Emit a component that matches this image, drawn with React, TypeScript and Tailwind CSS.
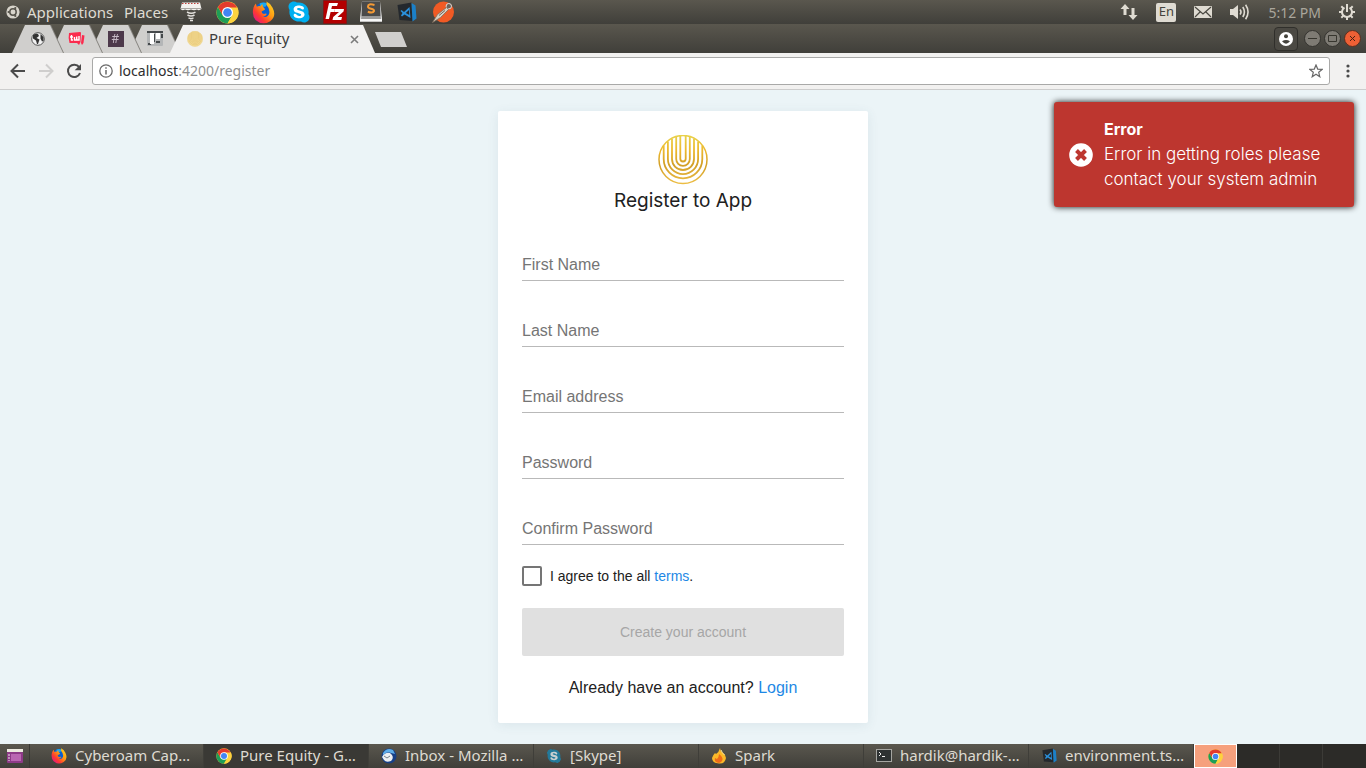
import type { ReactNode } from "react";
import { FaSkype } from "react-icons/fa6";

const panel = "bg-gradient-to-b from-[#5a574e] to-[#403f3a]";

function Chrome({ size }: { size: number }) {
  return (
    <svg width={size} height={size} viewBox="0 0 48 48" aria-hidden="true">
      <circle cx="24" cy="24" r="23" fill="#fdd23e" />
      <path d="M4.1 12.5 A23 23 0 0 0 24 47 L34 29.8 L24 24 L14 29.8 Z" fill="#1e9e57" />
      <path d="M43.9 12.5 A23 23 0 0 1 24 47 L34 29.8 L32 13 Z" fill="#fdd23e" />
      <path d="M4.1 12.5 L14 29.8 L24 13.5 H43.9 A23 23 0 0 0 4.1 12.5 Z" fill="#e33b2e" />
      <circle cx="24" cy="24" r="11.5" fill="#fff" />
      <circle cx="24" cy="24" r="9" fill="#4285f4" />
    </svg>
  );
}

function Firefox({ size }: { size: number }) {
  return (
    <svg width={size} height={size} viewBox="0 0 48 48" aria-hidden="true">
      <defs>
        <linearGradient id="fox" x1="1" y1="0" x2="0.1" y2="0.9">
          <stop offset="0" stopColor="#ffe226" />
          <stop offset="0.45" stopColor="#ff9a13" />
          <stop offset="0.75" stopColor="#ff3b30" />
          <stop offset="1" stopColor="#e31587" />
        </linearGradient>
      </defs>
      <circle cx="24" cy="22" r="19" fill="#0a5fd0" />
      <path d="M16 5 Q24 1 32 5 L28 12 L17 12 Z" fill="#1aa8f0" />
      <path
        d="M3 14 Q5 8 8 5 L10 12 Q14 9 18 11 Q19 8 22 6 Q21 12 26 15 L27 18 Q22 20 20 22 Q20 27 25 27 Q29 25 31 27 Q29 32 23 32 Q32 36 36 26 Q38 17 30 8 Q31 4 30 1 Q39 5 43 14 Q52 32 38 42 Q22 52 8 40 Q-1 30 3 14 Z"
        fill="url(#fox)"
      />
    </svg>
  );
}

function Skype({ size, dim = false }: { size: number; dim?: boolean }) {
  return (
    <FaSkype
      size={size}
      aria-hidden="true"
      className={
        dim
          ? "rounded-lg bg-[radial-gradient(circle,#c9cfd0_50%,transparent_51%)] text-[#23799a]"
          : "rounded-lg bg-[radial-gradient(circle,#fff_50%,transparent_51%)] text-[#00aff0]"
      }
    />
  );
}

function VsCode({ size }: { size: number }) {
  return (
    <svg width={size} height={size} viewBox="0 0 40 40" aria-hidden="true">
      <path d="M1 6 L29 1 L31 38 L5 36 Z" fill="#24282d" />
      <path d="M29 2 L37 7 L39 33 L31 39 Z" fill="#1b80c8" />
      <path d="M25 10 L14 20 L9 16 L7 18 L11 22 L8 27 L10 29 L15 25 L27 32 Z M24 16 L24.5 26 L17.5 22 Z" fill="#2a90dc" fillRule="evenodd" />
    </svg>
  );
}

function FileZilla() {
  return (
    <svg width="24" height="24" viewBox="0 0 24 24" aria-hidden="true">
      <rect x="0.5" y="0.5" width="23" height="23" fill="#b30000" stroke="#7d1010" strokeDasharray="1 1" />
      <path d="M6 3 H15 L14 6 H9 L8.3 9 H12 L11.3 12 H7.6 L6 19 H2.5 Z" fill="#fff" />
      <path d="M12 9 H21 L20.5 11.5 L14.5 17 H19 L18.3 20 H9.5 L10.2 17 L16 12 H11.3 Z" fill="#fff" />
    </svg>
  );
}

function Sublime() {
  return (
    <svg width="24" height="24" viewBox="0 0 24 24" aria-hidden="true">
      <path d="M3 1.5 H21 L23 18 V21.5 H1 V18 Z" fill="#dcdcdc" />
      <path d="M3 1.5 H21 L21.5 16.5 H2.5 Z" fill="#4a4a4a" />
      <path d="M2.5 16.5 H21.5 L22 19 H2 Z" fill="#9b9b9b" />
      <path d="M1 19 H23 V21.5 H1 Z" fill="#f7f7f7" />
      <path d="M15.5 5 Q9 3.2 9 6.5 Q9 8.2 12 8.8 Q15.3 9.4 15 11.2 Q14 13.5 8.8 11.7" fill="none" stroke="#f59a35" strokeWidth="2" />
    </svg>
  );
}

function Postman() {
  return (
    <svg width="24" height="24" viewBox="0 0 24 24" aria-hidden="true">
      <circle cx="12.5" cy="12" r="10.5" fill="#f15a24" />
      <circle cx="17.8" cy="6.2" r="2.7" fill="#6b6259" stroke="#ddd" />
      <path d="M15.5 7.5 L6.5 14.5 L1.5 22.5 L9.5 17.5 L17.5 9.5 Z" fill="#d9d0c2" stroke="#806d5c" strokeWidth="0.8" />
      <path d="M8 15.5 L14 10.5" stroke="#6f6459" strokeWidth="1" />
    </svg>
  );
}

function Robo() {
  return (
    <svg width="24" height="24" viewBox="0 0 24 24" aria-hidden="true">
      <path d="M3 2.5 H21 L22.5 9 Q20 11 18 9.5 Q15 11 12 9.5 Q9 11 6 9.5 Q3 11 1.5 9 Z" fill="#f4f2ee" />
      <path d="M3 3.5 H21" stroke="#bd4039" strokeWidth="1.2" strokeDasharray="1.5 1.5" />
      <path d="M2 8.5 H22" stroke="#a9a6a1" strokeWidth="1" />
      <path d="M8 12 Q12 14.5 16.5 12.2 M8.5 15 Q12 17 15.5 15 M9.5 17.8 Q12 19.2 14.5 17.8 M11 20.5 H14" fill="none" stroke="#e4e2de" strokeWidth="1.5" />
    </svg>
  );
}

function Equity({ size, faint = false }: { size: number; faint?: boolean }) {
  return (
    <svg width={size} height={size} viewBox="0 0 50 50" aria-hidden="true">
      <defs>
        <linearGradient id="gold" x1="0" y1="0" x2="0" y2="50" gradientUnits="userSpaceOnUse">
          <stop offset="0" stopColor="#e8d24c" />
          <stop offset="0.3" stopColor="#edb92e" />
          <stop offset="0.6" stopColor="#d29f27" />
          <stop offset="1" stopColor="#eebf45" />
        </linearGradient>
      </defs>
      <circle cx="25" cy="24.5" r="24" fill={faint ? "#f2d993" : "none"} stroke={faint ? "#ecd080" : "url(#gold)"} strokeWidth="1.5" />
      <g fill="none" stroke={faint ? "#e6c672" : "url(#gold)"} strokeWidth="1.8">
        <path d="M22.3 1 V23.8 A2.7 2.7 0 0 0 27.7 23.8 V1" />
        <path d="M18.2 2 V24 A6.8 6.8 0 0 0 31.8 24 V2" />
        <path d="M14 4 V24 A11 11 0 0 0 36 24 V4" />
        <path d="M9.9 6.5 V24 A15.1 15.1 0 0 0 40.1 24 V6.5" />
        <path d="M5.7 10.5 V24 A19.3 19.3 0 0 0 44.3 24 V10.5" />
      </g>
    </svg>
  );
}

const launcher = "flex size-6 items-center justify-center";

function TopPanel() {
  return (
    <header className={`flex h-6 items-center justify-between pl-[6px] pr-[11px] text-[15px] text-[#dfdbd2] ${panel}`}>
      <div className="flex items-center">
        <svg width="14" height="14" viewBox="0 0 14 14" aria-hidden="true">
          <circle cx="7" cy="7" r="6.6" fill="#d8d4cb" />
          <circle cx="7" cy="7" r="3.2" fill="none" stroke="#57544c" strokeWidth="1.5" />
          <circle cx="2.6" cy="7" r="1.1" fill="#57544c" />
          <circle cx="9.3" cy="3.1" r="1.1" fill="#57544c" />
          <circle cx="9.3" cy="10.9" r="1.1" fill="#57544c" />
        </svg>
        <button className="ml-[7px] w-[85px] whitespace-nowrap text-left">Applications</button>
        <button className="ml-3 w-[43px] whitespace-nowrap text-left">Places</button>
        <div className="ml-3 flex gap-3">
          <button aria-label="Robomongo" className={launcher}><Robo /></button>
          <button aria-label="Chrome" className={launcher}><Chrome size={23} /></button>
          <button aria-label="Firefox" className={launcher}><Firefox size={23} /></button>
          <button aria-label="Skype" className={launcher}><Skype size={24} /></button>
          <button aria-label="FileZilla" className={launcher}><FileZilla /></button>
          <button aria-label="Sublime Text" className={launcher}><Sublime /></button>
          <button aria-label="Code" className={launcher}><VsCode size={20} /></button>
          <button aria-label="Postman" className={launcher}><Postman /></button>
        </div>
      </div>
      <div className="flex items-center gap-[18px]">
        <svg width="18" height="18" viewBox="0 0 18 18" fill="#dfdbd2" aria-hidden="true">
          <path d="M5 1 L9.5 6 H6.5 V12 H3.5 V6 H0.5 Z M13 17 L17.5 12 H14.5 V5 H11.5 V12 H8.5 Z" />
        </svg>
        <span className="flex h-[19px] w-5 items-center justify-center rounded-xs bg-[#dfdbd2] text-[13px] text-[#45433d]">En</span>
        <svg width="18" height="12" viewBox="0 0 18 12" aria-hidden="true">
          <rect width="18" height="12" rx="1" fill="#dfdbd2" />
          <path d="M1 1 L9 8 L17 1 M1 11 L6 6 M17 11 L12 6" fill="none" stroke="#4a4841" strokeWidth="1.2" />
        </svg>
        <svg width="20" height="18" viewBox="0 0 20 18" fill="none" stroke="#dfdbd2" strokeWidth="1.6" aria-hidden="true">
          <path d="M0 6 H3 L8 2 V16 L3 12 H0 Z" fill="#dfdbd2" stroke="none" />
          <path d="M10 6.5 Q12 9 10 11.5 M12.8 4 Q16 9 12.8 14 M15.6 1.8 Q20.5 9 15.6 16.2" />
        </svg>
        <time className="text-[14px] text-[#aaa69c]">5:12 PM</time>
        <svg width="16" height="16" viewBox="0 0 16 16" fill="none" stroke="#dfdbd2" aria-hidden="true">
          <path d="M5.5 3.7 A5 5 0 1 0 10.5 3.7" strokeWidth="2" />
          <path d="M8 0 V8 M0 8 H3 M13 8 H16 M8 13 V16 M2.3 2.3 L4.4 4.4 M13.7 2.3 L11.6 4.4 M2.3 13.7 L4.4 11.6 M13.7 13.7 L11.6 11.6" strokeWidth="2" />
        </svg>
      </div>
    </header>
  );
}

function SmallTab({ label, stack, children }: { label: string; stack: string; children: ReactNode }) {
  return (
    <div className={`relative -mr-3 drop-shadow-[1px_0_0_#85837e] ${stack}`}>
      <button
        aria-label={label}
        className="flex h-7 w-[51px] items-center justify-center bg-[#d0cfcd] [clip-path:polygon(13px_0,38px_0,100%_100%,0_100%)]"
      >
        {children}
      </button>
    </div>
  );
}

function TabStrip() {
  return (
    <div className={`flex h-[29px] items-end justify-between pl-3 pr-[5px] ${panel}`}>
      <div className="flex items-end">
        <SmallTab label="Globe" stack="z-40">
          <svg width="14" height="14" viewBox="0 0 14 14" aria-hidden="true">
            <circle cx="7" cy="7" r="6.3" fill="#f1f1f1" stroke="#555" />
            <path d="M2 3 Q5 1 7 2 L8 4 L5.5 6 L8.5 7.5 L7 12 L6 12 L5 8.5 L2 6.5 Z M9.5 2 L12.5 5 L12.5 9 L11 9.5 L9.5 6.5 Z" fill="#333" />
          </svg>
        </SmallTab>
        <SmallTab label="Chat" stack="z-30">
          <svg width="17" height="14" viewBox="0 0 17 14" aria-hidden="true">
            <path d="M1 1 L12 0 Q13 0 13 1 L12.5 10 L11 13 L9 11 L1.5 11 Q0 6 1 1 Z" fill="#fb2b4e" />
            <path d="M14 3 L16.5 3.5 L15.5 11 L14 13 L13 11 Z" fill="#fb2b4e" />
            <path d="M3.5 3 V8 H5 M2 5 H5 M6.5 5 V8 H11 V4 M8.7 4.5 V8" fill="none" stroke="#fff" strokeWidth="1.4" />
          </svg>
        </SmallTab>
        <SmallTab label="Channel" stack="z-20">
          <span className="flex size-4 items-center justify-center bg-[#4d394b] text-[12px] leading-4 text-[#c5b9c5]">#</span>
        </SmallTab>
        <SmallTab label="Board" stack="z-10">
          <svg width="16" height="16" viewBox="0 0 16 16" aria-hidden="true">
            <rect width="16" height="15" rx="1" fill="#b4b6b7" />
            <path d="M0 0 H16 V2 H0 Z M7 3 H8 V11 H7 Z M1 12 H4 V14 H1 Z M9 10 H13 V12 H9 Z M14 3 H16 V7 H14 Z" fill="#45494b" />
            <path d="M3 2 H7 V13 H3 Z M9 2 H13 V8 H9 Z" fill="#fff" />
          </svg>
        </SmallTab>
        <div className="relative z-50 ml-[2px] flex h-7 w-[205px] items-center bg-[#f2f1f0] pl-[17px] pr-[16px] [clip-path:polygon(13px_0,193px_0,100%_100%,0_100%)]">
          <Equity size={16} faint />
          <span className="ml-[6px] flex-1 whitespace-nowrap pb-px text-[15px] text-[#3d3d3d]">Pure Equity</span>
          <button aria-label="Close tab">
            <svg width="9" height="9" viewBox="0 0 9 9" stroke="#7c7c7c" strokeWidth="1.6" aria-hidden="true">
              <path d="M1 1 L8 8 M8 1 L1 8" />
            </svg>
          </button>
        </div>
        <button aria-label="New tab" className="mb-[6px] h-[15px] w-8 bg-[#d0cfcd] [clip-path:polygon(0_0,26px_0,100%_100%,6px_100%)]" />
      </div>
      <div className="flex items-center gap-1 self-center">
        <button aria-label="Profile" className="flex size-6 items-center justify-center rounded-sm border border-[#302f2b] bg-[#4b4943]">
          <svg width="14" height="14" viewBox="0 0 14 14" aria-hidden="true">
            <circle cx="7" cy="7" r="7" fill="#fff" />
            <circle cx="7" cy="4.2" r="2" fill="#45433d" />
            <path d="M3 9.3 Q7 6.5 11 9.3 Q7 14 3 9.3 Z" fill="#45433d" />
          </svg>
        </button>
        <div className="flex items-center gap-[3px] pl-[2px]">
          <button aria-label="Minimise" className="flex size-[17px] items-center justify-center rounded-full border border-[#34332f] bg-[#7e7b74]">
            <svg width="9" height="9" viewBox="0 0 9 9" stroke="#37362f" aria-hidden="true"><path d="M0 4.5 H9" /></svg>
          </button>
          <button aria-label="Maximise" className="flex size-[17px] items-center justify-center rounded-full border border-[#34332f] bg-[#7e7b74]">
            <svg width="9" height="9" viewBox="0 0 9 9" fill="none" stroke="#37362f" aria-hidden="true"><path d="M0.5 1.5 H8.5 V7.5 H0.5 Z" /></svg>
          </button>
          <button aria-label="Close" className="flex size-[17px] items-center justify-center rounded-full border border-[#5a2f20] bg-[#ee6035]">
            <svg width="7" height="7" viewBox="0 0 7 7" stroke="#4a2112" aria-hidden="true"><path d="M1 1 L6 6 M6 1 L1 6" /></svg>
          </button>
        </div>
      </div>
    </div>
  );
}

function Toolbar() {
  return (
    <div className="flex h-[37px] items-center border-b border-[#cdcdcd] bg-[#f2f1f0] pl-[10px] pr-[15px]">
      <button aria-label="Back">
        <svg width="16" height="16" viewBox="0 0 16 16" fill="none" stroke="#4b4b4b" strokeWidth="2" aria-hidden="true">
          <path d="M15 8 H2 M8 1.5 L1.5 8 L8 14.5" />
        </svg>
      </button>
      <button aria-label="Forward" className="ml-3" disabled>
        <svg width="16" height="16" viewBox="0 0 16 16" fill="none" stroke="#cfcecd" strokeWidth="2" aria-hidden="true">
          <path d="M1 8 H14 M8 1.5 L14.5 8 L8 14.5" />
        </svg>
      </button>
      <button aria-label="Reload" className="ml-3">
        <svg width="16" height="16" viewBox="0 0 16 16" aria-hidden="true">
          <path d="M13.2 4.2 A6.2 6.2 0 1 0 14 10" fill="none" stroke="#4b4b4b" strokeWidth="2" />
          <path d="M15 1 V7.3 H8.7 Z" fill="#4b4b4b" />
        </svg>
      </button>
      <div className="ml-[10px] flex h-7 flex-1 items-center rounded-[3px] border border-[#a9a9a8] bg-white px-[6px]">
        <svg width="14" height="14" viewBox="0 0 14 14" aria-hidden="true">
          <circle cx="7" cy="7" r="6.2" fill="none" stroke="#6a6a6a" strokeWidth="1.3" />
          <path d="M7 6 V10.5 M7 3.3 V4.8" stroke="#6a6a6a" strokeWidth="1.5" />
        </svg>
        <span className="ml-[6px] flex-1 pb-px text-[14px] text-[#8f8f8f]"><span className="text-[#2e2e2e]">localhost</span>:4200/register</span>
        <button aria-label="Bookmark">
          <svg width="14" height="14" viewBox="0 0 14 14" aria-hidden="true">
            <path d="M7 1 L8.7 5.1 L13.2 5.4 L9.7 8.3 L10.8 12.8 L7 10.3 L3.2 12.8 L4.3 8.3 L0.8 5.4 L5.3 5.1 Z" fill="none" stroke="#676767" strokeWidth="1.2" />
          </svg>
        </button>
      </div>
      <button aria-label="Menu" className="ml-[15px]">
        <svg width="6" height="14" viewBox="0 0 6 14" fill="#4a4a4a" aria-hidden="true">
          <circle cx="3" cy="2" r="1.6" /><circle cx="3" cy="7" r="1.6" /><circle cx="3" cy="12" r="1.6" />
        </svg>
      </button>
    </div>
  );
}

const fields = [
  { id: "first", label: "First Name", type: "text" },
  { id: "last", label: "Last Name", type: "text" },
  { id: "email", label: "Email address", type: "email" },
  { id: "password", label: "Password", type: "password" },
  { id: "confirm", label: "Confirm Password", type: "password" },
];

function RegisterCard() {
  return (
    <form className="w-[370px] rounded-xs bg-white p-6 font-['Liberation_Sans',sans-serif] text-[#212121] shadow-[0_2px_12px_rgba(60,90,110,0.09)]">
      <div className="flex justify-center"><Equity size={50} /></div>
      <h1 className="h-[30px] text-center font-['Inter',sans-serif] text-[19px] leading-8">Register to App</h1>
      {fields.map((field) => (
        <div key={field.id} className="grid pt-[38px] text-[16px] leading-6">
          <input
            id={field.id}
            type={field.type}
            placeholder=" "
            className="peer col-start-1 row-start-1 h-7 border-b border-[#b9b9b9] pb-[3px] outline-none"
          />
          <label
            htmlFor={field.id}
            className="pointer-events-none invisible col-start-1 row-start-1 text-[#757575] peer-placeholder-shown:visible"
          >
            {field.label}
          </label>
        </div>
      ))}
      <label className="mt-[21px] flex h-5 items-center gap-2 text-[14px]">
        <input type="checkbox" className="size-5 appearance-none rounded-xs border-2 border-[#757575] checked:bg-[#1e88e5]" />
        <span>I agree to the all <a href="#terms" className="text-[#1e88e5]">terms</a>.</span>
      </label>
      <button disabled className="mt-[22px] h-12 w-full rounded-xs bg-[#e0e0e0] text-[14px] text-[#a6a6a6]">Create your account</button>
      <p className="mt-5 text-center text-[16px] leading-[23px]">
        Already have an account? <a href="#login" className="text-[#1e88e5]">Login</a>
      </p>
    </form>
  );
}

function Toast() {
  return (
    <div role="alert" className="absolute right-3 top-3 flex w-[300px] items-center gap-[11px] rounded-[3px] bg-[#bd362f] p-[15px] font-['Inter',sans-serif] leading-[25px] text-white shadow-[0_0_6px_#111]">
      <svg width="24" height="24" viewBox="0 0 24 24" className="shrink-0" aria-hidden="true">
        <circle cx="12" cy="12" r="11.8" fill="#fff" />
        <path d="M7.5 7.5 L16.5 16.5 M16.5 7.5 L7.5 16.5" stroke="#bd362f" strokeWidth="4" />
      </svg>
      <div>
        <p className="text-[16px] font-bold leading-[25px]">Error</p>
        <p className="text-[17px] font-light leading-[25px]">Error in getting roles please contact your system admin</p>
      </div>
    </div>
  );
}

function Thunderbird() {
  return (
    <svg width="16" height="16" viewBox="0 0 16 16" aria-hidden="true">
      <circle cx="8" cy="8" r="7.5" fill="#173f86" />
      <path d="M2 5 Q6 -1 12 2 L14 6 L10 5 Q6 3 2 7 Z" fill="#5eaeea" />
      <path d="M1 9 Q4 4 9 5 L11 7 Q13 10 10 13 Q5 15 3 12 Z" fill="#eceff2" />
      <path d="M3 8 L6 10 L9 8" fill="none" stroke="#74808c" />
    </svg>
  );
}

function Flame() {
  return (
    <svg width="16" height="16" viewBox="0 0 16 16" aria-hidden="true">
      <path d="M9 0 Q9 3 12 5 Q15 7 15 10 Q14 16 8 15.5 Q1 15 1 10 Q2 7 4 5 L5 6 Q8 4 9 0 Z" fill="#fbb829" />
      <path d="M8 6 Q12 9 11.5 12 Q10 16 6 14.5 Q3 13 4 10 L6 11 Q8 9 8 6 Z" fill="#ee6b1a" />
      <path d="M10 2 Q11 5 13.5 7" stroke="#ffe99d" fill="none" />
    </svg>
  );
}

function Terminal() {
  return (
    <svg width="16" height="13" viewBox="0 0 16 13" aria-hidden="true">
      <rect x="0.5" y="0.5" width="15" height="12" fill="#2e3232" stroke="#a5a5a1" />
      <path d="M3 3 L5 5 L3 7 M6 7.5 H9" stroke="#eee" fill="none" />
    </svg>
  );
}

const tasks = [
  { title: "Cyberoam Cap…", icon: <Firefox size={16} /> },
  { title: "Pure Equity - G…", icon: <Chrome size={16} />, active: true },
  { title: "Inbox - Mozilla …", icon: <Thunderbird /> },
  { title: "[Skype]", icon: <Skype size={16} dim /> },
  { title: "Spark", icon: <Flame /> },
  { title: "hardik@hardik-…", icon: <Terminal /> },
  { title: "environment.ts…", icon: <VsCode size={15} /> },
];

function Taskbar() {
  return (
    <footer className={`flex h-6 text-[15px] text-[#dfdbd2] ${panel}`}>
      <button aria-label="Show desktop" className="flex w-[30px] items-center justify-center border-r border-[#3a3934]">
        <svg width="16" height="14" viewBox="0 0 16 14" aria-hidden="true">
          <rect x="0" y="3" width="16" height="11" rx="1" fill="#8e3a88" />
          <rect width="16" height="3" fill="#ece9df" />
          <rect x="4" y="5" width="10" height="7" fill="#ba66b2" />
          <path d="M2 5 V12" stroke="#eee" strokeDasharray="2 1" />
        </svg>
      </button>
      <nav className="ml-[9px] flex min-w-0 flex-1">
        {tasks.map((task) => (
          <button
            key={task.title}
            className={`flex min-w-0 flex-1 items-center gap-2 whitespace-nowrap border-r border-[#3f3e39] pb-px pl-3 ${task.active ? "bg-[#3a3935]" : ""}`}
          >
            <span className="flex w-4 shrink-0 justify-center">{task.icon}</span>
            {task.title}
          </button>
        ))}
      </nav>
      <div className="flex bg-[#2c2b28]">
        <button aria-label="Workspace 1" className="flex w-[43px] items-center justify-center border border-white bg-[#f6a07d]"><Chrome size={15} /></button>
        <button aria-label="Workspace 2" className="w-[43px] border-r border-[#3c3b37]" />
        <button aria-label="Workspace 3" className="w-[43px] border-r border-[#3c3b37]" />
        <button aria-label="Workspace 4" className="w-[43px]" />
      </div>
    </footer>
  );
}

export default function App() {
  return (
    <div className="flex min-h-screen flex-col font-['Noto_Sans',sans-serif]">
      <TopPanel />
      <TabStrip />
      <Toolbar />
      <main className="relative flex flex-1 items-start justify-center bg-[#ebf4f7] pt-[21px]">
        <RegisterCard />
        <Toast />
      </main>
      <Taskbar />
    </div>
  );
}
